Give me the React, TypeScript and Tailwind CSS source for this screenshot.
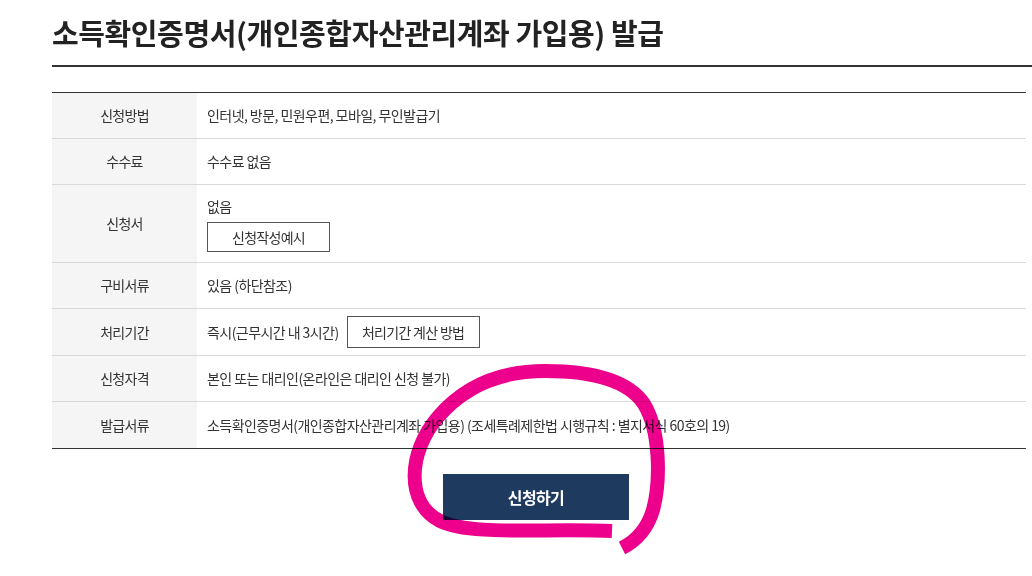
import React from "react";

type Row = {
  label: string;
  content: React.ReactNode;
  h: string;
  tall?: boolean;
};

const outlineBtn =
  "inline-flex items-center justify-center border border-[#555] bg-white text-[14px] text-[#333] tracking-[-0.05em]";

const rows: Row[] = [
  { label: "신청방법", h: "min-h-[46px]", content: "인터넷, 방문, 민원우편, 모바일, 무인발급기" },
  { label: "수수료", h: "min-h-[46px]", content: "수수료 없음" },
  {
    label: "신청서",
    h: "min-h-[78px]",
    tall: true,
    content: (
      <div className="flex flex-col items-start gap-[6px]">
        <span className="leading-[20px]">없음</span>
        <button className={`${outlineBtn} h-[30px] w-[123px]`}>신청작성예시</button>
      </div>
    ),
  },
  { label: "구비서류", h: "min-h-[46px]", content: "있음 (하단참조)" },
  {
    label: "처리기간",
    h: "min-h-[47px]",
    content: (
      <div className="flex items-center gap-[8px]">
        <span>즉시(근무시간 내 3시간)</span>
        <button className={`${outlineBtn} h-[32px] w-[133px]`}>처리기간 계산 방법</button>
      </div>
    ),
  },
  { label: "신청자격", h: "min-h-[46px]", content: "본인 또는 대리인(온라인은 대리인 신청 불가)" },
  {
    label: "발급서류",
    h: "min-h-[47px]",
    content: "소득확인증명서(개인종합자산관리계좌 가입용) (조세특례제한법 시행규칙 : 별지서식 60호의 19)",
  },
];

export default function App() {
  return (
    <div
      className="relative h-[576px] w-[1032px] overflow-hidden bg-white text-[#333]"
      style={{ fontFamily: '"Noto Sans CJK KR", "Noto Sans", sans-serif' }}
    >
      <div className="pl-[52px] pt-[12px]">
        <h1 className="text-[29px] font-bold leading-[40px] tracking-[-0.4px] text-[#222]">
          소득확인증명서(개인종합자산관리계좌 가입용) 발급
        </h1>
        <div className="mt-[13px] h-[2px] bg-[#333]" />

        <div className="mr-[6px] mt-[25px] border-t border-[#333]">
          {rows.map((row, i) => (
            <div
              key={row.label}
              className={`flex border-b ${i === rows.length - 1 ? "border-[#333]" : "border-[#d9d9d9]"} ${row.h}`}
            >
              <div className="flex w-[145px] shrink-0 items-center justify-center bg-[#f5f5f5] text-[14px] tracking-[-0.05em]">
                {row.label}
              </div>
              <div
                className={`flex flex-1 items-center pl-[10px] text-[14px] tracking-[-0.04em] ${
                  row.tall ? "pb-[10px] pt-[11px]" : ""
                }`}
              >
                {row.content}
              </div>
            </div>
          ))}
        </div>

        <div className="mr-[12px] mt-[25px] flex justify-center">
          <button className="h-[46px] w-[186px] bg-[#1f3a5f] text-[16px] font-bold tracking-[-0.04em] text-white">
            신청하기
          </button>
        </div>
      </div>

      {/* hand-drawn highlight around the apply button */}
      <svg
        className="pointer-events-none absolute left-0 top-0 mix-blend-multiply"
        width="1032"
        height="576"
        viewBox="0 0 1032 576"
      >
        <path
          d="M 612 531 C 545 528, 470 536, 440 521 C 405 503, 408 452, 438 417 C 468 382, 508 371, 545 371 C 590 371, 628 380, 644 404 C 660 430, 661 480, 653 510 C 647 530, 636 541, 622 548"
          fill="none"
          stroke="#ec008c"
          strokeWidth="14"
          strokeLinecap="butt"
        />
      </svg>
    </div>
  );
}
